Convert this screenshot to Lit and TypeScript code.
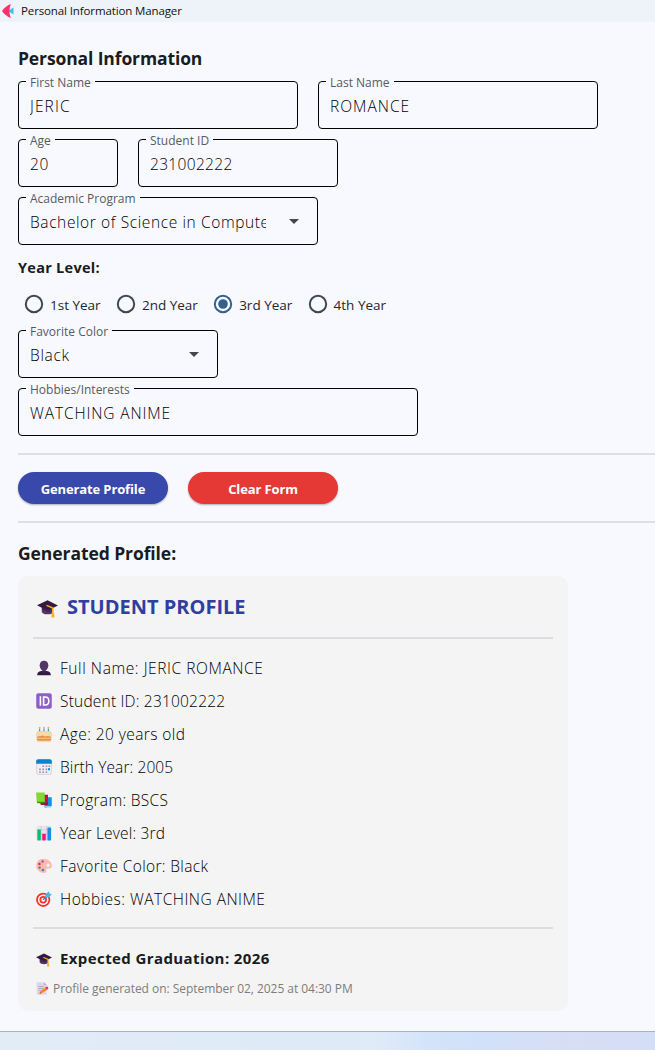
import { LitElement, html, css, svg } from "lit";
import { customElement } from "lit/decorators.js";

const cap = svg`<path d="M4.500 9.500v4.200c0 1.400 2.200 2.800 5.500 2.800s5-1 5-2.500V9.500z" fill="#533566"/><path d="M10 3.200 0 7.900l10 5.300 10-5z" fill="#321b41"/><path d="M5 10.600v1.200l5.400 2.600 4.200-2z" fill="#402152"/><path d="M9.600 8.200 15 10.400v7" fill="none" stroke="#f9a72b" stroke-width="1.500" stroke-linecap="round" stroke-linejoin="round"/><path d="M14 15.200h2.200l.6 4.300h-3.200z" fill="#ffb02e"/>`;
const icons: Record<string, unknown> = {
  cap,
  user: svg`<path d="M1.500 19c0-4 2.500-5.300 6.500-5.300h4c4 0 6.500 1.300 6.500 5.300z" fill="#321b41"/><path d="M8 11h4v4l-2 1.300-2-1.300z" fill="#402a52"/><path d="M10 .8c-3.500 0-5.400 2.400-5.400 5.700 0 3.800 2.500 7 5.400 7s5.400-3.200 5.400-7C15.400 3.200 13.500.8 10 .8z" fill="#533566"/>`,
  id: svg`<rect x=".3" y=".3" width="19.400" height="19.400" rx="2.500" fill="#8c5fc6"/><path d="M5.500 4v12M9.500 5v10h2.200c2.700 0 4.300-2 4.300-5s-1.600-5-4.300-5z" fill="none" stroke="#fff" stroke-width="2"/>`,
  cake: svg`<path d="M4.500 3v5M10 3v5M15.500 3v5" stroke="#26a9dc" stroke-width="1.600"/><circle cx="4.500" cy="2" r="1.200" fill="#ffb02e"/><circle cx="10" cy="2" r="1.200" fill="#ffb02e"/><circle cx="15.500" cy="2" r="1.200" fill="#ffb02e"/><rect x="1" y="7" width="18" height="12" rx="2" fill="#e0944a"/><path d="M.6 9c0-1.500 1-2.500 2.500-2.500h13.800C18.400 6.500 19.400 7.500 19.400 9v3.500c-1.500 1.500-3 .2-4.700 0s-3 1.400-4.700 0-3 .2-4.700 0S2.100 14 .6 12.500z" fill="#fcd9a0"/><path d="M1 15.300h18" stroke="#fbdcac" stroke-width="1"/><path d="M.3 18.700h19.400" stroke="#fbd08c" stroke-width="1"/>`,
  calendar: svg`<rect x=".6" y=".6" width="18.800" height="18.800" rx="2.500" fill="#f0edf5" stroke="#cdc4d6" stroke-width=".8"/><path d="M.2 6V3C.2 1.300 1.300.2 3 .2h14c1.700 0 2.800 1.100 2.800 2.800v3z" fill="#0684cc"/><g fill="#998ea4"><path d="M8 8h2v2H8zM12 8h2v2h-2zM15.800 8h2v2h-2zM4 12h2v2H4zM8 12h2v2H8zM12 12h2v2h-2zM4 15.500h2v2H4zM8 15.500h2v2H8zM12 15.500h2v2h-2z"/></g><path d="M15 11.700h2.500v2.500H15z" fill="#008edc"/>`,
  books: svg`<path d="M9 6.500h10.700v11L11 19.700z" fill="#1590e0"/><path d="M10 17.500h9v2h-8z" fill="#8fcdf2"/><path d="M5 3.500h10v12.500H6.500z" fill="#ca0b4a"/><path d="M5 14h10l-.5 2H6z" fill="#8d0d3a"/><path d="M0 .6h10.800l.3 12H1z" fill="#86d72f"/><path d="M1 12.300h10.100v1.900H1.800z" fill="#3d8a22"/>`,
  chart: svg`<rect x=".5" y=".8" width="19" height="18.400" rx="2" fill="#e8e3ee"/><path d="M1 6h18M1 11h18M6.500 1v18M13.200 1v18" stroke="#cbbfd6" stroke-width=".8"/><rect x="1.700" y="5.500" width="4.300" height="13.900" rx=".5" fill="#00c16b"/><rect x="7.800" y="11" width="4.400" height="8.400" rx=".5" fill="#f0147d"/><rect x="14.300" y="3.200" width="4.500" height="16.200" rx=".5" fill="#1590e0"/>`,
  palette: svg`<path d="M9 1C4 1 .3 4.500.3 9.500c0 5.200 4.400 9.400 9.800 9.400 2.500 0 3.200-1.500 2.700-3.200-.6-2 .5-2.800 2.400-2.600 2.600.3 4.600-.8 4.600-3.500C19.800 4.500 14.500 1 9 1z" fill="#ffb9ad"/><circle cx="15" cy="9" r="2" fill="#f4f4f4"/><circle cx="8.200" cy="4.300" r="1.500" fill="#8c5fc6"/><circle cx="4.300" cy="7.500" r="1.600" fill="#e3246c"/><circle cx="4.500" cy="12" r="1.500" fill="#2a9d50"/><circle cx="8.600" cy="15" r="1.600" fill="#3b7de0"/>`,
  target: svg`<circle cx="9" cy="11" r="8.900" fill="#f8312f"/><circle cx="9" cy="11" r="6.600" fill="#fff"/><circle cx="9" cy="11" r="4.700" fill="#f8312f"/><circle cx="9" cy="11" r="2.500" fill="#fff"/><path d="m9 11 6-6" stroke="#1887c9" stroke-width="1.800"/><path d="m11.500 8.500.3-4.500L16 .2l.9 2.900 2.900.9-3.800 4.200z" fill="#46b8ef"/>`,
  memo: svg`<path d="M1 1.500C1 .8 1.500.3 2.300.3h9.900l4.300 4.300v14c0 .7-.5 1.100-1.200 1.100h-13c-.8 0-1.300-.4-1.300-1.100z" fill="#dfd7e8"/><path d="M12.200.3v4.300h4.300z" fill="#b9aac8"/><path d="M4 7h8M4 10h7M4 13h3" stroke="#a79ab5" stroke-width="1.200"/><path d="m5.500 17.800 1.300-4.100 8.300-5.800 2.600 3.500-8.300 6z" fill="#ff822d"/><path d="m14.500 8.300 1.500-1.100c1.500-1 4 2.200 2.700 3.300l-1.600 1.200z" fill="#f8256e"/><path d="m5.500 17.800.6-2 1.500 1.700z" fill="#402a32"/>`,
};

// icon, text, tracking in px
const rows: [string, string, number][] = [
  ["user", "Full Name: JERIC ROMANCE", 0.58],
  ["id", "Student ID: 231002222", 0.2],
  ["cake", "Age: 20 years old", 0.42],
  ["calendar", "Birth Year: 2005", 0.1],
  ["books", "Program: BSCS", 0.32],
  ["chart", "Year Level: 3rd", 0.19],
  ["palette", "Favorite Color: Black", 0.36],
  ["target", "Hobbies: WATCHING ANIME", 0.48],
];

@customElement("app-root")
export class AppRoot extends LitElement {
  static styles = css`
    :host { display: flex; flex-direction: column; height: 1050px; overflow: hidden; background: #f8f9ff; color: #191c20; font-family: "Open Sans", "Noto Sans", sans-serif; }
    * { box-sizing: border-box; white-space: nowrap; }
    .titlebar { height: 22px; background: #eef3fa; display: flex; align-items: center; gap: 7px; padding: 0 0 1px 2px; font-size: 11.5px; letter-spacing: -0.12px; color: #111; flex: none; }
    .page { flex: 1; min-height: 0; display: flex; flex-direction: column; gap: 10px; padding: 24px 0 0 18px; align-items: flex-start; }
    .page > *, .card > * { flex: none; }
    h1, h2 { margin: 0; font-weight: 700; font-size: 17.5px; letter-spacing: -0.12px; height: 25px; line-height: 24px; }
    h2 { height: 26px; line-height: 27px; letter-spacing: -0.08px; }
    .row { display: flex; gap: 20px; }
    .field { position: relative; height: 48px; border: 1px solid #000; border-radius: 4px; padding: 2px 0 0 11px; display: flex; align-items: center; font-size: 15.5px; }
    .w100 { width: 100px; }
    .w200 { width: 200px; }
    .w280 { width: 280px; }
    .w300 { width: 300px; }
    .w400 { width: 400px; }
    .label { position: absolute; left: 7px; top: -8px; padding: 0 4px; height: 18px; line-height: 17px; font-size: 12px; background: #f8f9ff; color: #565b62; }
    .value { overflow: hidden; width: 236px; font-weight: 300; color: #000; }
    .arrow { position: absolute; right: 18px; top: 21px; border: 5px solid transparent; border-top-color: #42474e; border-bottom: 0; }
    .year { font-weight: 700; font-size: 14.5px; letter-spacing: 0.28px; height: 25px; line-height: 25px; }
    .radios { display: flex; height: 30px; align-items: center; gap: 15.3px; padding: 0 0 2px 6px; font-size: 13.5px; }
    .radio { display: flex; align-items: center; gap: 6px; }
    .radio span { padding-top: 2px; color: #24272b; }
    .rule { height: 16px; align-self: stretch; display: flex; align-items: center; }
    .rule::after { content: ""; flex: 1; height: 2px; background: #dddfe5; }
    .btn { width: 150px; height: 32px; border-radius: 16px; color: #fff; font-weight: 700; font-size: 13px; letter-spacing: -0.13px; display: flex; justify-content: center; align-items: center; padding-top: 2px; box-shadow: 0 1px 2px rgba(0,0,0,.3); }
    .blue { background: #3949ab; }
    .red { background: #e53935; }
    .card { width: 550px; height: 434.5px; border-radius: 10px; background: #f4f4f4; padding: 15px; display: flex; flex-direction: column; gap: 8px; }
    .card .rule { height: 18px; }
    .card .rule::after { background: #dcdce1; }
    .title { height: 30px; display: flex; align-items: center; gap: 9px; padding: 2px 0 0 4px; font-size: 20px; font-weight: 700; color: #303f9f; }
    .title span { padding-bottom: 2px; }
    .line { height: 25px; display: flex; align-items: center; gap: 8px; padding: 1px 0 0 3px; font-size: 15.5px; font-weight: 300; color: #000; }
    .line span { padding-bottom: 1px; }
    .grad { font-weight: 700; font-size: 15px; letter-spacing: 0.4px; height: 26px; color: #191c20; }
    .stamp { height: 18px; font-size: 12px; font-weight: 400; color: #7d7d7d; gap: 4px; letter-spacing: -0.04px; }
    svg { flex: none; display: block; }
    .taskbar { height: 19px; flex: none; border-top: 1px solid #aab0c0; background: linear-gradient(90deg, #e1ecf7 0, #dfeaf8 340px, #e0ebf8 375px, #d3e3fa 430px, #d2e1f9 500px, #d7ddf5 560px, #d4def6 655px); }
  `;
  icon(name: string, size: number) {
    return html`<svg width=${size} height=${size} viewBox="0 0 20 20">${icons[name]}</svg>`;
  }
  field(cls: string, label: string, value: string, tracking: number, select = false) {
    return html`<div class="field ${cls}"><span class="label">${label}</span><span class="value" style="letter-spacing:${tracking}px">${value}</span>${select ? html`<i class="arrow"></i>` : ""}</div>`;
  }
  radio(label: string, on = false) {
    const c = on ? "#36618e" : "#42474e";
    return html`<div class="radio"><svg width="20" height="20"><circle cx="10" cy="10" r="8.200" fill="none" stroke=${c} stroke-width="2"/>${on ? svg`<circle cx="10" cy="10" r="4.800" fill=${c}/>` : ""}</svg><span>${label}</span></div>`;
  }
  render() {
    return html`
      <div class="titlebar"><svg width="12" height="14" viewBox="0 0 12 14"><path d="M11.500 3.500v7L6 7z" fill="#4cb9ee"/><path d="M8.800 0C7 4.500 7 9.500 8.800 14 5 12.500 2 10 0 7 2 4 5 1.500 8.800 0z" fill="#f8316c"/></svg><span>Personal Information Manager</span></div>
      <div class="page">
        <h1>Personal Information</h1>
        <div class="row">${this.field("w280", "First Name", "JERIC", 1.1)}${this.field("w280", "Last Name", "ROMANCE", 1)}</div>
        <div class="row">${this.field("w100", "Age", "20", 0.6)}${this.field("w200", "Student ID", "231002222", 0.33)}</div>
        ${this.field("w300", "Academic Program", "Bachelor of Science in Compute", 0.61, true)}
        <div class="year">Year Level:</div>
        <div class="radios">${this.radio("1st Year")}${this.radio("2nd Year")}${this.radio("3rd Year", true)}${this.radio("4th Year")}</div>
        ${this.field("w200", "Favorite Color", "Black", 0.7, true)}
        ${this.field("w400", "Hobbies/Interests", "WATCHING ANIME", 0.88)}
        <div class="rule"></div>
        <div class="row"><div class="btn blue">Generate Profile</div><div class="btn red">Clear Form</div></div>
        <div class="rule"></div>
        <h2>Generated Profile:</h2>
        <div class="card">
          <div class="title">${this.icon("cap", 21)}<span>STUDENT PROFILE</span></div>
          <div class="rule"></div>
          ${rows.map(([i, t, ls]) => html`<div class="line">${this.icon(i, 16)}<span style="letter-spacing:${ls}px">${t}</span></div>`)}
          <div class="rule"></div>
          <div class="line grad">${this.icon("cap", 16)}<span>Expected Graduation: 2026</span></div>
          <div class="line stamp">${this.icon("memo", 13)}<span>Profile generated on: September 02, 2025 at 04:30 PM</span></div>
        </div>
      </div>
      <div class="taskbar"></div>`;
  }
}
